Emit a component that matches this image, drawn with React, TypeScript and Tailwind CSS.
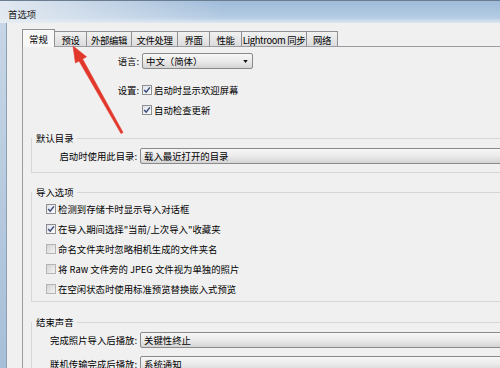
const tabs: [string, number][] = [
  ["常规", 33],
  ["预设", 32],
  ["外部编辑", 45],
  ["文件处理", 46],
  ["界面", 32],
  ["性能", 32],
  ["Lightroom 同步", 65],
  ["网络", 31],
];

const importOptions: [string, boolean][] = [
  ["检测到存储卡时显示导入对话框", true],
  ['在导入期间选择"当前/上次导入"收藏夹', true],
  ["命名文件夹时忽略相机生成的文件夹名", false],
  ["将 Raw 文件旁的 JPEG 文件视为单独的照片", false],
  ["在空闲状态时使用标准预览替换嵌入式预览", false],
];

const Check = ({ on }: { on?: boolean }) => (
  <span
    className={`flex size-[10px] shrink-0 items-center justify-center border ${
      on
        ? "border-[#8f8f8f] bg-linear-to-br from-[#dde3ec] to-[#fbfbfb]"
        : "border-[#b4b4b4] bg-linear-to-br from-[#d4d4d4] to-[#f3f3f3]"
    }`}
  >
    {on && (
      <svg viewBox="0 0 8 8" className="size-[8px]">
        <path d="M1.2 4 L3.2 6.2 L6.9 1.4" fill="none" stroke="#3b4b78" strokeWidth="1.5" />
      </svg>
    )}
  </span>
);

const Select = ({ text, className, arrow }: { text: string; className: string; arrow?: boolean }) => (
  <div
    className={`flex h-[16px] shrink-0 items-center rounded-[2px] border border-[#8a8a8a] bg-linear-to-b from-[#f6f6f6] via-[#ebebeb] to-[#d4d4d4] ${className}`}
  >
    <span>{text}</span>
    {arrow && (
      <svg viewBox="0 0 6 4" className="ml-auto mr-[4px] h-[3px] w-[5px]">
        <path d="M0 0 H6 L3 4 Z" fill="#111" />
      </svg>
    )}
  </div>
);

const Group = ({ title, className, children }: { title: string; className: string; children: React.ReactNode }) => (
  <fieldset className={`ml-[8px] w-[600px] shrink-0 border border-[#d6d6d6] ${className}`}>
    <legend className="pl-[4px] pr-[3px] leading-[12px]">{title}</legend>
    {children}
  </fieldset>
);

export default function App() {
  return (
    <div className="relative flex h-[368px] w-[500px] flex-col overflow-hidden font-['Noto_Sans_CJK_SC','Microsoft_YaHei',sans-serif] text-[9.4px] leading-[12px] text-black">
      {/* title bar */}
      <div className="flex h-[23px] shrink-0 items-center border-t border-[#6b7d91] bg-[linear-gradient(to_right,rgba(232,237,243,0.9),rgba(232,237,243,0)_45%),linear-gradient(to_bottom,#9fbbd9,#b4cbe3_75%,#dde7f1)] pl-[8px] pt-[3px]">
        <span className="text-[#1b1b1b]">首选项</span>
      </div>

      <div className="flex flex-1 overflow-hidden">
        <div className="w-[6px] shrink-0 bg-linear-to-b from-[#c7d6e6] to-[#a6bfd8]" />
        <div className="flex flex-1 flex-col overflow-hidden border-l border-[#8d9fb3] bg-[#f0f0f0] pl-[15px] pt-[6px]">
          {/* tabs */}
          <div className="flex h-[17px] shrink-0 items-end">
            {tabs.map(([name, w], i) =>
              i === 0 ? (
                <div
                  key={name}
                  style={{ width: w }}
                  className="relative z-10 -mb-px flex h-[18px] shrink-0 items-center justify-center border-x border-t border-[#8e9096] bg-[#f8f8f8] pt-[1px]"
                >
                  {name}
                </div>
              ) : (
                <div
                  key={name}
                  style={{ width: w }}
                  className="flex h-[15px] shrink-0 items-center justify-center overflow-hidden whitespace-nowrap border-r border-t border-[#8e9096] bg-linear-to-b from-[#f1f1f1] to-[#dcdcdc] pt-[2px] tracking-[-0.35px]"
                >
                  {name}
                </div>
              )
            )}
          </div>

          {/* panel */}
          <div className="flex flex-1 flex-col overflow-hidden border-l border-t border-[#9a9ca2] bg-[#f0f0f0]">
            <div className="mt-[6px] flex shrink-0 items-center">
              <span className="w-[117px] shrink-0 pr-[1px] text-right">语言:</span>
              <Select text="中文（简体）" arrow className="ml-[2px] w-[111px] pl-[3px]" />
            </div>

            <div className="mt-[11px] flex h-[20px] shrink-0 items-center">
              <span className="w-[117px] shrink-0 pr-[1px] text-right">设置:</span>
              <span className="ml-[2px]">
                <Check on />
              </span>
              <span className="ml-[2px]">启动时显示欢迎屏幕</span>
            </div>
            <div className="flex h-[20px] shrink-0 items-center pl-[119px]">
              <Check on />
              <span className="ml-[2px]">自动检查更新</span>
            </div>

            <Group title="默认目录" className="mt-[12px] pb-[8px]">
              <div className="mt-[4px] flex items-center">
                <span className="w-[105px] shrink-0 text-right">启动时使用此目录:</span>
                <Select text="载入最近打开的目录" className="ml-[3px] w-[500px] pl-[3px]" />
              </div>
            </Group>

            <Group title="导入选项" className="mt-[13px] pb-[2px]">
              <div className="mt-[1px] flex flex-col pl-[14px]">
                {importOptions.map(([label, on]) => (
                  <div key={label} className="flex h-[20px] shrink-0 items-center">
                    <Check on={on} />
                    <span className="ml-[2px] whitespace-nowrap">{label}</span>
                  </div>
                ))}
              </div>
            </Group>

            <Group title="结束声音" className="mt-[14px] pb-[8px]">
              <div className="mt-[4px] flex items-center">
                <span className="w-[105px] shrink-0 text-right">完成照片导入后播放:</span>
                <Select text="关键性终止" className="ml-[3px] w-[500px] pl-[3px]" />
              </div>
              <div className="mt-[8px] flex items-center">
                <span className="w-[105px] shrink-0 text-right">联机传输完成后播放:</span>
                <Select text="系统通知" className="ml-[3px] w-[500px] pl-[3px]" />
              </div>
            </Group>
          </div>
        </div>
      </div>

      {/* red annotation arrow */}
      <svg className="pointer-events-none absolute left-0 top-0 h-[368px] w-[500px]" viewBox="0 0 500 368">
        <polygon
          points="73,46 86.5,56.8 82.6,59 123,132.4 121,133.6 79,61 75.4,63"
          fill="#e2382c"
          stroke="#e2382c"
          strokeWidth="0.6"
          strokeLinejoin="round"
        />
      </svg>
    </div>
  );
}
